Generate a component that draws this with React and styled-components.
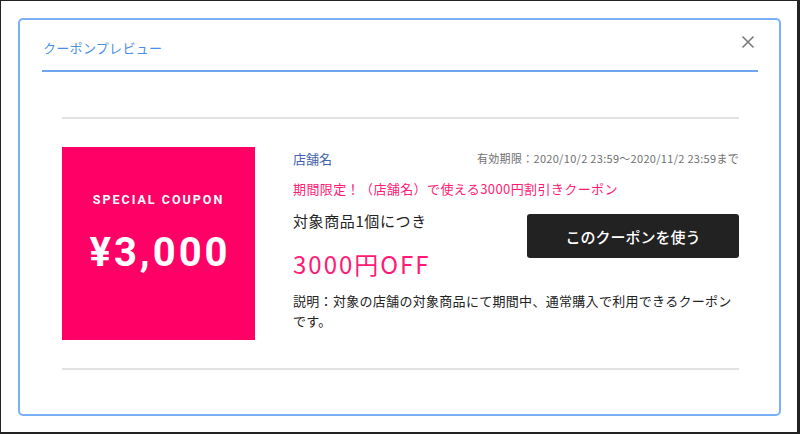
import styled, { createGlobalStyle } from "styled-components";

const GlobalStyle = createGlobalStyle`
  html, body {
    margin: 0;
    padding: 0;
    background: #fff;
  }
  body {
    font-family: "Noto Sans CJK JP", "Noto Sans", sans-serif;
    color: #222;
  }
`;

const Frame = styled.div`
  box-sizing: border-box;
  width: 800px;
  height: 434px;
  border-style: solid;
  border-color: #222;
  border-width: 1px 3px 2px 1px;
  padding: 17px 16px 17px 17px;
  background: #fff;
`;

const Modal = styled.div`
  box-sizing: border-box;
  height: 398px;
  border: 2px solid #7ab0f7;
  border-radius: 5px;
  padding: 0 21px 0 22px;
  display: flex;
  flex-direction: column;
`;

const Header = styled.div`
  display: flex;
  align-items: center;
  justify-content: space-between;
  height: 50px;
  border-bottom: 2px solid #6fa6f2;
  padding: 0 1px;
`;

const Title = styled.h2`
  margin: 0;
  margin-top: 4px;
  font-size: 13px;
  font-weight: 400;
  color: #4a90e6;
  letter-spacing: 0.3px;
`;

const CloseButton = styled.button`
  border: 0;
  background: none;
  padding: 0;
  width: 14px;
  height: 14px;
  margin-top: -7px;
  margin-right: 2px;
  cursor: pointer;
  display: flex;
`;

const Body = styled.div`
  padding: 45px 19px 0 20px;
`;

const Coupon = styled.div`
  display: flex;
  gap: 38px;
  padding: 28px 0;
  border-top: 2px solid #e2e2e2;
  border-bottom: 2px solid #e2e2e2;
`;

const Ticket = styled.div`
  box-sizing: border-box;
  flex: 0 0 193px;
  height: 193px;
  padding-top: 45px;
  background: #ff0066;
  color: #fff;
  display: flex;
  flex-direction: column;
  align-items: center;
  font-family: Roboto, "Noto Sans", sans-serif;
  font-weight: 700;
`;

const Label = styled.div`
  font-size: 12.5px;
  letter-spacing: 2px;
  line-height: 16px;
`;

const Amount = styled.div`
  font-size: 40px;
  letter-spacing: 3px;
  line-height: 44px;
  margin-top: 23px;
  margin-right: -3px;
`;

const Info = styled.div`
  flex: 1;
  display: flex;
  flex-direction: column;
`;

const TopRow = styled.div`
  display: flex;
  justify-content: space-between;
  align-items: center;
  height: 22px;
`;

const Shop = styled.span`
  font-size: 13px;
  color: #3f63ad;
`;

const Period = styled.span`
  font-size: 11px;
  letter-spacing: 0.3px;
  color: #707070;
`;

const Catch = styled.p`
  margin: 10px 0 0;
  font-size: 13px;
  line-height: 20px;
  letter-spacing: 0.4px;
  color: #ff1a75;
`;

const OfferRow = styled.div`
  display: flex;
  justify-content: space-between;
  margin-top: 10px;
`;

const OfferText = styled.div`
  display: flex;
  flex-direction: column;
`;

const Target = styled.span`
  font-size: 15px;
  line-height: 24px;
  letter-spacing: 0.6px;
  color: #222;
`;

const Discount = styled.span`
  font-size: 24px;
  line-height: 30px;
  margin-top: 16px;
  letter-spacing: 2px;
  color: #ff1a75;
`;

const UseButton = styled.button`
  width: 212px;
  height: 44px;
  margin-top: 5px;
  border: 0;
  border-radius: 3px;
  background: #222;
  color: #fff;
  font-family: "Noto Sans CJK JP", sans-serif;
  font-size: 15px;
  font-weight: 500;
  cursor: pointer;
`;

const Note = styled.p`
  margin: 12px 0 0;
  font-size: 13px;
  line-height: 20px;
  letter-spacing: 0.3px;
  color: #222;
`;

const CloseIcon = () => (
  <svg width="14" height="14" viewBox="0 0 14 14">
    <path d="M1.5 1.5 L12.5 12.5 M12.5 1.5 L1.5 12.5" stroke="#7a7a7a" strokeWidth="1.6" fill="none" />
  </svg>
);

export default function App() {
  return (
    <>
      <GlobalStyle />
      <Frame>
        <Modal>
          <Header>
            <Title>クーポンプレビュー</Title>
            <CloseButton aria-label="閉じる">
              <CloseIcon />
            </CloseButton>
          </Header>
          <Body>
            <Coupon>
              <Ticket>
                <Label>SPECIAL COUPON</Label>
                <Amount>¥3,000</Amount>
              </Ticket>
              <Info>
                <TopRow>
                  <Shop>店舗名</Shop>
                  <Period>有効期限：2020/10/2 23:59〜2020/11/2 23:59まで</Period>
                </TopRow>
                <Catch>期間限定！（店舗名）で使える3000円割引きクーポン</Catch>
                <OfferRow>
                  <OfferText>
                    <Target>対象商品1個につき</Target>
                    <Discount>3000円OFF</Discount>
                  </OfferText>
                  <UseButton>このクーポンを使う</UseButton>
                </OfferRow>
                <Note>説明：対象の店舗の対象商品にて期間中、通常購入で利用できるクーポンです。</Note>
              </Info>
            </Coupon>
          </Body>
        </Modal>
      </Frame>
    </>
  );
}
